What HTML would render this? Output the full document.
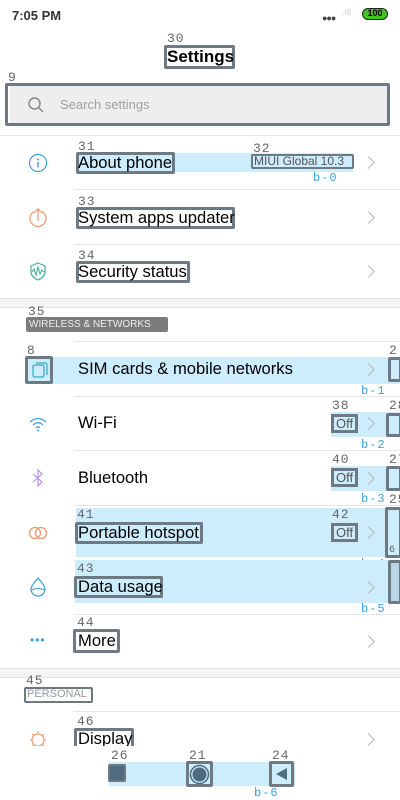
<!DOCTYPE html>
<html><head><meta charset="utf-8"><style>
*{margin:0;padding:0;box-sizing:border-box}
body{width:400px;height:800px;position:relative;background:#fff;font-family:"Liberation Sans",sans-serif;overflow:hidden;color:#000}
.a{position:absolute}
.box{position:absolute;border:3px solid #6d7a83;border-radius:2px}
.n{position:absolute;font-size:13px;color:#666;font-family:"Liberation Mono",monospace;letter-spacing:1px}
.hl{position:absolute;background:#cdecfc}
.t{position:absolute;font-size:16.6px;line-height:20px;white-space:nowrap}
.line{position:absolute;height:1px;background:#e6e6e6;left:74px;right:0}
.chev{position:absolute;left:364px;width:9px;height:9px;border-right:1.3px solid #b8b8b8;border-top:1.3px solid #b8b8b8;transform:rotate(45deg)}
.b{position:absolute;font-size:12px;color:#3aa0e0;font-family:"Liberation Mono",monospace;letter-spacing:1px}
.gap{position:absolute;left:0;right:0;background:#f5f5f5;border-top:1px solid #e3e3e3;border-bottom:1px solid #e3e3e3}
.off{position:absolute;font-size:13px;color:#555;border:3px solid #6d7a83;padding:0 2px;line-height:13px;left:331px}
</style></head><body>
<div class="t" style="left:12px;top:6px;font-size:13px;font-weight:bold;color:#333">7:05 PM</div>
<div class="a" style="left:322px;top:13px;font-size:9px;color:#444;letter-spacing:-1px">●●●</div>
<div class="a" style="left:342px;top:7px;font-size:9px;color:#ccc">.ıll</div>
<div class="a" style="left:362px;top:8px;width:26px;height:12px;background:#44c324;border:1.5px solid #222;border-radius:6px;font-size:9px;font-weight:bold;text-align:center;line-height:9px">100</div>

<div class="n" style="left:167px;top:31px">30</div>
<div class="box" style="left:164px;top:45px;width:71px;height:24px"></div>
<div class="t" style="left:167px;top:47px;font-size:17px;font-weight:bold">Settings</div>

<div class="n" style="left:8px;top:70px">9</div>
<div class="a" style="left:10px;top:86px;width:377px;height:37px;background:#eeeeee"></div>
<div class="box" style="left:5px;top:83px;width:385px;height:43px"></div>
<svg class="a" style="left:27px;top:96px" width="18" height="18"><circle cx="7.5" cy="7.5" r="5.5" fill="none" stroke="#888" stroke-width="1.5"/><line x1="11.5" y1="11.5" x2="16" y2="16" stroke="#888" stroke-width="1.5"/></svg>
<div class="t" style="left:60px;top:95px;font-size:13px;color:#a0a0a0">Search settings</div>
<div class="a" style="left:0;right:0;top:135px;height:1px;background:#e3e3e3"></div>

<!-- About -->
<svg class="a" style="left:28px;top:153px" width="20" height="20"><circle cx="10" cy="10" r="8.5" fill="none" stroke="#3a9ed6" stroke-width="1.2"/><circle cx="10" cy="6.5" r="1" fill="#3a9ed6"/><line x1="10" y1="9" x2="10" y2="14.5" stroke="#3a9ed6" stroke-width="1.4"/></svg>
<div class="hl" style="left:77px;top:153px;width:276px;height:19px"></div>
<div class="n" style="left:78px;top:139px">31</div>
<div class="box" style="left:76px;top:152px;width:99px;height:22px"></div>
<div class="t" style="left:78px;top:153px">About phone</div>
<div class="n" style="left:253px;top:141px">32</div>
<div class="box" style="left:251px;top:154px;width:103px;height:15px;border-width:2px"></div>
<div class="t" style="left:254px;top:154px;font-size:12px;line-height:14px;color:#555">MIUI Global 10.3</div>
<div class="b" style="left:313px;top:171px">b-0</div>
<div class="chev" style="top:158px"></div>
<div class="line" style="top:189px"></div>

<!-- System -->
<svg class="a" style="left:28px;top:207px" width="20" height="20"><path d="M6 4.5A8 8 0 1 0 14 4.5" fill="none" stroke="#ec9a6e" stroke-width="1.2"/><path d="M10 14V2M6 6l4-4 4 4" fill="none" stroke="#ec9a6e" stroke-width="1.2"/></svg>
<div class="n" style="left:78px;top:194px">33</div>
<div class="box" style="left:76px;top:207px;width:159px;height:22px"></div>
<div class="t" style="left:78px;top:208px">System apps updater</div>
<div class="chev" style="top:213px"></div>
<div class="line" style="top:244px"></div>

<!-- Security -->
<svg class="a" style="left:28px;top:261px" width="20" height="20"><path d="M10 2L17 5V11Q17 16 10 19Q3 16 3 11V5Z" fill="none" stroke="#46b09a" stroke-width="1.2"/><path d="M4 11L6 8L8 14L10 6L12 13L14 9L16 11" fill="none" stroke="#46b09a" stroke-width="1.1"/></svg>
<div class="n" style="left:78px;top:248px">34</div>
<div class="box" style="left:76px;top:261px;width:114px;height:22px"></div>
<div class="t" style="left:78px;top:262px">Security status</div>
<div class="chev" style="top:267px"></div>

<div class="gap" style="top:298px;height:10px"></div>
<div class="n" style="left:28px;top:304px">35</div>
<div class="a" style="left:26px;top:317px;width:142px;height:15px;background:#7c7c7c;border-radius:2px"></div>
<div class="t" style="left:29px;top:318px;font-size:10px;line-height:13px;color:#eee">WIRELESS &amp; NETWORKS</div>
<div class="line" style="top:341px"></div>

<!-- SIM -->
<div class="hl" style="left:26px;top:357px;width:374px;height:27px"></div>
<div class="n" style="left:27px;top:343px">8</div>
<div class="box" style="left:25px;top:356px;width:28px;height:28px"></div>
<svg class="a" style="left:30px;top:360px" width="20" height="20"><rect x="3" y="5" width="11" height="12" rx="1.5" fill="none" stroke="#3aa8c8" stroke-width="1.2"/><path d="M6 3H15Q17 3 17 5V15" fill="none" stroke="#3aa8c8" stroke-width="1.2"/></svg>
<div class="t" style="left:78px;top:359px">SIM cards &amp; mobile networks</div>
<div class="chev" style="top:365px"></div>
<div class="n" style="left:389px;top:343px">2</div>
<div class="box" style="left:388px;top:357px;width:14px;height:25px"></div>
<div class="b" style="left:361px;top:384px">b-1</div>
<div class="line" style="top:396px"></div>

<!-- WiFi -->
<svg class="a" style="left:28px;top:414px" width="20" height="20"><path d="M2 8Q10 1 18 8M5 11Q10 6.5 15 11M8 14Q10 12 12 14" fill="none" stroke="#3a9ed6" stroke-width="1.2"/><circle cx="10" cy="16.5" r="1" fill="#3a9ed6"/></svg>
<div class="t" style="left:78px;top:413px">Wi-Fi</div>
<div class="hl" style="left:331px;top:412px;width:69px;height:25px"></div>
<div class="n" style="left:332px;top:398px">38</div>
<div class="off" style="top:414px">Off</div>
<div class="chev" style="top:419px"></div>
<div class="n" style="left:389px;top:398px">28</div>
<div class="box" style="left:386px;top:413px;width:16px;height:24px"></div>
<div class="b" style="left:361px;top:438px">b-2</div>
<div class="line" style="top:450px"></div>

<!-- BT -->
<svg class="a" style="left:30px;top:468px" width="16" height="20"><path d="M3 6L12 14L8 18V2L12 6L3 14" fill="none" stroke="#b38be6" stroke-width="1.1"/></svg>
<div class="t" style="left:78px;top:468px">Bluetooth</div>
<div class="hl" style="left:331px;top:466px;width:69px;height:25px"></div>
<div class="n" style="left:332px;top:452px">40</div>
<div class="off" style="top:468px">Off</div>
<div class="chev" style="top:474px"></div>
<div class="n" style="left:389px;top:452px">27</div>
<div class="box" style="left:386px;top:466px;width:16px;height:25px"></div>
<div class="b" style="left:361px;top:492px">b-3</div>
<div class="line" style="top:505px"></div>

<!-- Hotspot -->
<div class="hl" style="left:76px;top:508px;width:324px;height:49px"></div>
<svg class="a" style="left:27px;top:523px" width="22" height="20"><circle cx="8" cy="10" r="5.5" fill="none" stroke="#ec9a6e" stroke-width="1.3"/><circle cx="14" cy="10" r="5.5" fill="none" stroke="#ec9a6e" stroke-width="1.3"/></svg>
<div class="n" style="left:77px;top:507px">41</div>
<div class="box" style="left:75px;top:522px;width:128px;height:22px"></div>
<div class="t" style="left:78px;top:523px">Portable hotspot</div>
<div class="n" style="left:332px;top:507px">42</div>
<div class="off" style="top:523px">Off</div>
<div class="chev" style="top:528px"></div>
<div class="n" style="left:389px;top:492px">25</div>
<div class="box" style="left:385px;top:507px;width:17px;height:51px"></div>
<div class="n" style="left:389px;top:545px;font-size:10px">6</div>
<div class="b" style="left:361px;top:557px">b-4</div>

<!-- Data -->
<div class="hl" style="left:75px;top:560px;width:325px;height:43px"></div>
<svg class="a" style="left:28px;top:576px" width="20" height="22"><path d="M10 2Q17 10 17 13A7 7 0 0 1 3 13Q3 10 10 2Z" fill="none" stroke="#3a9ed6" stroke-width="1.2"/><path d="M3.5 14Q10 11 16.5 14" fill="none" stroke="#3a9ed6" stroke-width="1.1"/></svg>
<div class="n" style="left:77px;top:561px">43</div>
<div class="box" style="left:74px;top:576px;width:89px;height:22px"></div>
<div class="t" style="left:78px;top:577px">Data usage</div>
<div class="chev" style="top:583px"></div>
<div class="box" style="left:388px;top:560px;width:14px;height:44px;background:#b8d6e6"></div>
<div class="b" style="left:361px;top:602px">b-5</div>
<div class="line" style="top:614px"></div>

<!-- More -->
<div class="a" style="left:30px;top:633px;font-size:12px;color:#3a9ed6;letter-spacing:1px">•••</div>
<div class="n" style="left:77px;top:615px">44</div>
<div class="box" style="left:73px;top:629px;width:47px;height:24px"></div>
<div class="t" style="left:78px;top:631px">More</div>
<div class="chev" style="top:637px"></div>

<div class="gap" style="top:668px;height:10px"></div>
<div class="n" style="left:26px;top:673px">45</div>
<div class="box" style="left:24px;top:687px;width:69px;height:16px;border-width:2px"></div>
<div class="t" style="left:27px;top:688px;font-size:11px;line-height:13px;color:#999">PERSONAL</div>
<div class="line" style="top:711px"></div>

<!-- Display -->
<svg class="a" style="left:28px;top:729px" width="20" height="22"><circle cx="10" cy="11" r="6" fill="none" stroke="#ec9a6e" stroke-width="1.2"/><path d="M10 2V4M10 18V20M2 11H4M16 11H18M4 5L5.5 6.5M16 5L14.5 6.5M4 17L5.5 15.5M16 17L14.5 15.5" stroke="#ec9a6e" stroke-width="1.1"/></svg>
<div class="n" style="left:77px;top:714px">46</div>
<div class="box" style="left:74px;top:728px;width:60px;height:23px"></div>
<div class="t" style="left:78px;top:729px">Display</div>
<div class="chev" style="top:735px"></div>

<!-- nav -->
<div class="a" style="left:0;right:0;top:746px;height:54px;background:#fff"></div>
<div class="hl" style="left:109px;top:762px;width:186px;height:24px"></div>
<div class="n" style="left:111px;top:748px">26</div>
<div class="a" style="left:108px;top:764px;width:18px;height:18px;background:#4f6b80;border:2px solid #6d7a83;border-radius:2px"></div>
<div class="n" style="left:189px;top:748px">21</div>
<div class="box" style="left:186px;top:761px;width:27px;height:26px"></div>
<svg class="a" style="left:189px;top:764px" width="21" height="21"><circle cx="10.5" cy="10.5" r="9" fill="none" stroke="#4f6b80" stroke-width="1.5"/><circle cx="10.5" cy="10.5" r="7" fill="#4f6b80"/></svg>
<div class="n" style="left:272px;top:748px">24</div>
<div class="box" style="left:269px;top:761px;width:25px;height:26px"></div>
<svg class="a" style="left:273px;top:766px" width="16" height="16"><path d="M14 2V14L3 8Z" fill="#4f6b80"/></svg>
<div class="b" style="left:254px;top:786px">b-6</div>
</body></html>
